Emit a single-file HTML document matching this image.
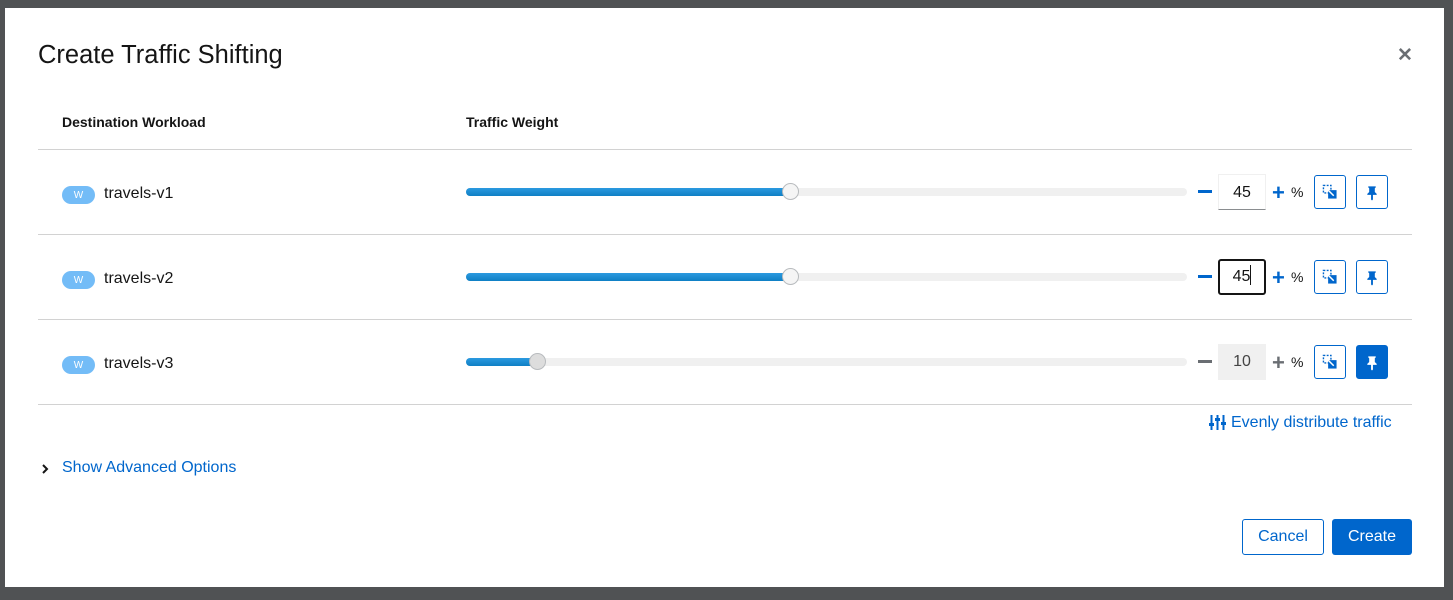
<!DOCTYPE html>
<html><head><style>
*{box-sizing:border-box;margin:0;padding:0}
body{width:1453px;height:600px;background:#505254;font-family:"Liberation Sans",sans-serif;position:relative;overflow:hidden;color:#151515}
.modal{position:absolute;left:5px;top:8px;width:1439px;height:579px;background:#fff}
.abs{position:absolute}
h1{position:absolute;left:33px;top:33px;font-size:25.5px;font-weight:400;color:#151515}
.close{left:1392px;top:36px;font-size:19px;color:#6a6e73;font-weight:700}
.th{font-size:14px;font-weight:700;top:106px}
.line{position:absolute;left:33px;width:1374px;height:1px;background:#d2d2d2}
.badge{position:absolute;left:57px;width:33px;height:18px;border-radius:9px;background:#73bcf7;color:#fff;font-size:10px;display:flex;align-items:center;justify-content:center}
.name{position:absolute;left:99px;font-size:16px}
.track{position:absolute;left:461px;width:721px;height:8px;border-radius:4px;background:#f0f0f0}
.fill{height:8px;border-radius:4px;background:linear-gradient(#2b9ae0,#0f7fc4)}
.knob{position:absolute;width:17px;height:17px;border-radius:50%;background:#f5f5f5;border:1px solid #b8bbbe}
.minus{position:absolute;left:1193px;width:14px;height:3px;background:#0066cc}
.inp{position:absolute;left:1213px;width:48px;height:36px;font-size:16px;text-align:center;line-height:36px;border:1px solid #f0f0f0;border-bottom-color:#8a8d90}
.plus{position:absolute;left:1267px;font-size:22px;font-weight:700;color:#0066cc;line-height:20px}
.pct{position:absolute;left:1286px;font-size:14px;color:#151515}
.btn{position:absolute;width:32px;height:34px;border:1px solid #0066cc;border-radius:3px}
</style></head><body>
<div class="modal">
<h1>Create Traffic Shifting</h1>
<div class="abs close">✕</div>
<div class="abs th" style="left:57px">Destination Workload</div>
<div class="abs th" style="left:461px">Traffic Weight</div>
<div class="line" style="top:141px"></div>
<div class="line" style="top:226px"></div>
<div class="line" style="top:311px"></div>
<div class="line" style="top:396px"></div>

<div class="badge" style="top:178px">W</div><div class="name" style="top:177px">travels-v1</div>
<div class="track" style="top:180px"><div class="fill" style="width:325px"></div></div>
<div class="knob" style="left:777px;top:175px"></div>
<div class="minus" style="top:182px"></div>
<div class="inp" style="top:166px">45</div>
<div class="plus" style="top:175px">+</div><div class="pct" style="top:176px">%</div>

<div class="badge" style="top:263px">W</div><div class="name" style="top:262px">travels-v2</div>
<div class="track" style="top:265px"><div class="fill" style="width:325px"></div></div>
<div class="knob" style="left:777px;top:260px"></div>
<div class="minus" style="top:267px"></div>
<div class="inp" style="top:251px;border:2px solid #151515;border-radius:3px;line-height:32px">45<span style="display:inline-block;width:1px;height:20px;background:#151515;vertical-align:-4px"></span></div>
<div class="plus" style="top:260px">+</div><div class="pct" style="top:261px">%</div>

<div class="badge" style="top:348px">W</div><div class="name" style="top:347px">travels-v3</div>
<div class="track" style="top:350px"><div class="fill" style="width:72px"></div></div>
<div class="knob" style="left:524px;top:345px;background:#ddd"></div>
<div class="minus" style="top:352px;background:#6a6e73"></div>
<div class="inp" style="top:336px;background:#f0f0f0;border:none;color:#444">10</div>
<div class="plus" style="top:345px;color:#6a6e73">+</div><div class="pct" style="top:346px">%</div>

<svg class="btn" style="left:1309px;top:167px" viewBox="0 0 32 34"><rect x="9" y="10" width="8" height="8" fill="none" stroke="#0066cc" stroke-dasharray="2 1.5" stroke-width="1.5"/><rect x="14" y="15" width="9" height="9" fill="#0066cc"/><path d="M12 13l8 8" stroke="#fff" stroke-width="1.6"/></svg>
<svg class="btn" style="left:1351px;top:167px" viewBox="0 0 32 34"><path d="M12 11h8v1l-1 1v4l2 2v1h-4v5l-1 1-1-1v-5h-4v-1l2-2v-4l-1-1z" fill="#0066cc"/></svg>
<svg class="btn" style="left:1309px;top:252px" viewBox="0 0 32 34"><rect x="9" y="10" width="8" height="8" fill="none" stroke="#0066cc" stroke-dasharray="2 1.5" stroke-width="1.5"/><rect x="14" y="15" width="9" height="9" fill="#0066cc"/><path d="M12 13l8 8" stroke="#fff" stroke-width="1.6"/></svg>
<svg class="btn" style="left:1351px;top:252px" viewBox="0 0 32 34"><path d="M12 11h8v1l-1 1v4l2 2v1h-4v5l-1 1-1-1v-5h-4v-1l2-2v-4l-1-1z" fill="#0066cc"/></svg>
<svg class="btn" style="left:1309px;top:337px" viewBox="0 0 32 34"><rect x="9" y="10" width="8" height="8" fill="none" stroke="#0066cc" stroke-dasharray="2 1.5" stroke-width="1.5"/><rect x="14" y="15" width="9" height="9" fill="#0066cc"/><path d="M12 13l8 8" stroke="#fff" stroke-width="1.6"/></svg>
<svg class="btn" style="left:1351px;top:337px;background:#0066cc" viewBox="0 0 32 34"><path d="M12 11h8v1l-1 1v4l2 2v1h-4v5l-1 1-1-1v-5h-4v-1l2-2v-4l-1-1z" fill="#fff"/></svg>

<svg class="abs" style="left:1204px;top:406px" width="17" height="17" viewBox="0 0 17 17"><g stroke="#0066cc" stroke-width="2"><path d="M2.5 1v15M8.5 1v15M14.5 1v15"/></g><g fill="#0066cc"><rect x="0" y="9" width="5" height="3"/><rect x="6" y="4" width="5" height="3"/><rect x="12" y="8" width="5" height="3"/></g></svg>
<div class="abs" style="left:1226px;top:406px;font-size:16px;color:#0066cc">Evenly distribute traffic</div>

<svg class="abs" style="left:36px;top:455px" width="8" height="12" viewBox="0 0 8 12"><path d="M2 2l4 4-4 4" fill="none" stroke="#151515" stroke-width="2"/></svg>
<div class="abs" style="left:57px;top:451px;font-size:16px;color:#0066cc">Show Advanced Options</div>

<div class="abs" style="left:1237px;top:511px;width:82px;height:36px;border:1px solid #0066cc;border-radius:3px;color:#0066cc;font-size:16px;text-align:center;line-height:34px">Cancel</div>
<div class="abs" style="left:1327px;top:511px;width:80px;height:36px;background:#0066cc;border-radius:3px;color:#fff;font-size:16px;text-align:center;line-height:36px">Create</div>
</div>
</body></html>
